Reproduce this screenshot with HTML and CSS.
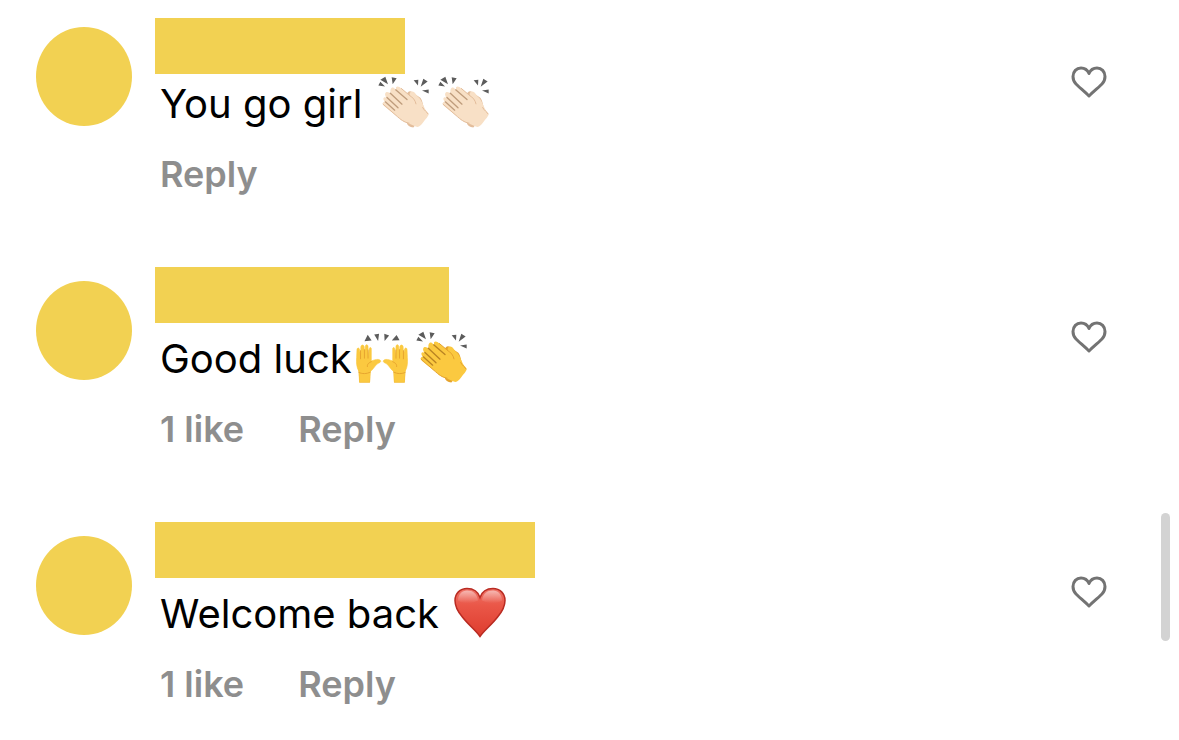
FILE: index.html
```
<!DOCTYPE html>
<html lang="en">
<head>
  <meta charset="utf-8">
  <meta name="viewport" content="width=device-width, initial-scale=1">
  <title>Comments</title>
  <link rel="stylesheet" href="styles.css">
</head>
<body>

  <!-- shared drawings -->
  <svg class="defs" aria-hidden="true">
    <defs>
      <linearGradient id="red" x1="0" y1="0" x2="0" y2="1">
        <stop offset="0" stop-color="#ee7468"/>
        <stop offset="0.35" stop-color="#ea5748"/>
        <stop offset="1" stop-color="#de3c2e"/>
      </linearGradient>
      <linearGradient id="shine" x1="0" y1="0" x2="0" y2="1">
        <stop offset="0" stop-color="#fff" stop-opacity="0.5"/>
        <stop offset="1" stop-color="#fff" stop-opacity="0"/>
      </linearGradient>
    </defs>
    <symbol id="clap" viewBox="54 36 156 158">
      <path class="ray" d="M55 64l6-11 14 14zM61 47l15-9 8 22zM95 39l15 3-12 18zM161 48l14-1-1 17zM190 44l13 8-21 16zM186 79l20-3v12z"/>
      <path class="skin-dark" d="M138 94C144 78 152 78 161 87L181 101C190 112 189 133 198 145L160 190C149 190 142 184 140 176Z"/>
      <path class="skin" d="M108 69C113 65 119 69 124 73L149 94C148 86 151 82 157 82C164 82 167 91 174 98C190 112 188 130 204 146C210 153 199 162 193 170C187 178 179 191 169 188C159 183 151 181 141 176C131 175 120 164 113 158L73 126C66 119 68 113 75 113L72 110C67 101 73 97 79 101L77 97C72 87 79 80 88 86L92 88C89 76 94 68 101 71L108 77Z"/>
      <path class="crease" d="M76 113L104 138M81 100L114 131M91 87L126 120M107 77L141 106"/>
      <path class="edge" d="M69 120L113 158C127 171 139 176 147 177M149 94C158 99 166 108 168 119M188 130C193 140 200 142 204 149M149 94L124 73"/>
    </symbol>
    <symbol id="raised" viewBox="54 38 160 158">
      <path class="ray" d="M80 67l10-20 12 18zM110 46l15-2-3 22zM141 44l15 5-14 17zM164 65l15-17 9 16z"/>
      <g id="palm">
        <path class="skin-dark" d="M62 151L64 194H97L98 158Z"/>
        <path class="skin wide" d="M57 94C57 86 64 86 65 93L68 113L69 84C70 77 78 77 79 84L80 111L83 82C84 76 91 77 91 84L91 113L95 89C97 84 102 86 101 93L101 128C109 125 116 122 123 123C131 124 132 131 126 133C115 136 111 150 98 160L96 193H65L63 160C55 145 55 133 56 117Z"/>
        <path class="edge" d="M68 96L68 121M80 93L80 119M91 94L91 119M63 163C73 168 86 168 98 162M101 130C91 134 88 139 89 145"/>
      </g>
      <use href="#palm" transform="matrix(-1 0 0 1 268 0)"/>
    </symbol>
    <symbol id="heart" viewBox="0 0 52 52">
      <path fill="url(#red)" stroke="#b92b22" stroke-width="1.5" d="M26 50C22 44 14 38 8 30C3 24 1 20 1 14C1 7 6 2 13 2C19 2 24 5 26 11C28 5 33 2 39 2C46 2 51 7 51 14C51 20 49 24 44 30C38 38 30 44 26 50Z"/>
      <path fill="url(#shine)" d="M4 14C4 8 8 4 13 4C19 4 23 7 24 14C18 17 10 18 4 14ZM28 14C29 7 33 4 39 4C44 4 48 8 48 14C42 18 34 17 28 14Z"/>
    </symbol>
    <symbol id="like" viewBox="0 0 36 32">
      <path fill="none" stroke="#737373" stroke-width="3" stroke-linejoin="round" d="M18 30C14 26 8 21 5 18C2 15 2 13 2 10.500C2 5.500 5.500 2 10 2C13.500 2 16.500 4 18 7.500C19.500 4 22.500 2 26 2C30.500 2 34 5.500 34 10.500C34 13 34 15 31 18C28 21 22 26 18 30Z"/>
    </symbol>
  </svg>

  <ul class="comments">
    <li class="comment comment-first">
      <div class="avatar"></div>
      <div class="comment-body">
        <div class="username username-short"></div>
        <p class="comment-text">You go girl <svg class="emoji light" role="img" aria-label="clapping hands"><use href="#clap"/></svg><svg class="emoji light" role="img" aria-label="clapping hands"><use href="#clap"/></svg></p>
        <div class="actions">
          <button type="button">Reply</button>
        </div>
      </div>
      <button type="button" class="like" aria-label="Like"><svg><use href="#like"/></svg></button>
    </li>

    <li class="comment">
      <div class="avatar"></div>
      <div class="comment-body">
        <div class="username username-medium"></div>
        <p class="comment-text">Good luck<svg class="emoji" role="img" aria-label="raised hands"><use href="#raised"/></svg><svg class="emoji" role="img" aria-label="clapping hands"><use href="#clap"/></svg></p>
        <div class="actions">
          <button type="button">1 like</button>
          <button type="button">Reply</button>
        </div>
      </div>
      <button type="button" class="like" aria-label="Like"><svg><use href="#like"/></svg></button>
    </li>

    <li class="comment">
      <div class="avatar"></div>
      <div class="comment-body">
        <div class="username username-long"></div>
        <p class="comment-text">Welcome back <svg class="emoji" role="img" aria-label="red heart"><use href="#heart"/></svg></p>
        <div class="actions">
          <button type="button">1 like</button>
          <button type="button">Reply</button>
        </div>
      </div>
      <button type="button" class="like" aria-label="Like"><svg><use href="#like"/></svg></button>
    </li>
  </ul>

  <div class="scroll-thumb"></div>

</body>
</html>
```
FILE: styles.css
```
body {
    margin: 0;
    background: #fff;
    color: #000;
    font-family: Inter, "Liberation Sans", sans-serif;
}

button {
    padding: 0;
    border: 0;
    background: none;
    font: inherit;
    color: inherit;
    cursor: pointer;
}

.defs {
    position: absolute;
    width: 0;
    height: 0;
}

.comments {
    margin: 0;
    padding: 18px 72px 0 36px;
    list-style: none;
}

.comment {
    display: flex;
    align-items: flex-start;
    padding-bottom: 69px;
}

.comment:last-child {
    padding-bottom: 0;
}

.avatar {
    flex: none;
    width: 96px;
    height: 99px;
    margin: 14px 23px 0 0;
    border-radius: 50%;
    background: #f2d152;
}

.comment-body {
    flex: 1;
    min-width: 0;
}

.username {
    max-width: 100%;
    height: 56px;
    background: #f2d152;
}

.username-short {
    width: 250px;
}

.username-medium {
    width: 294px;
}

.username-long {
    width: 380px;
}

.comment-text {
    margin: 8px 0 0 5px;
    font-size: 40px;
    line-height: 56px;
}

.emoji {
    width: 52px;
    height: 53px;
    margin: 0 4px;
    vertical-align: -11px;
}

.actions {
    display: flex;
    gap: 54px;
    margin: 18px 0 0 5px;
    color: #8e8e8e;
    font-size: 36px;
    font-weight: 600;
    line-height: 48px;
}

.like {
    flex: none;
    margin-top: 54px;
}

.like svg {
    display: block;
    width: 36px;
    height: 32px;
}

/* the first comment sits a little closer to its name */
.comment-first .avatar {
    margin-top: 9px;
}

.comment-first .comment-text {
    margin-top: 2px;
}

.comment-first .like {
    margin-top: 48px;
}

/* emoji colours */
.emoji {
    --skin: #fbc940;
    --skin-dark: #e5a32e;
    --crease: #b98322;
}

.emoji.light {
    --skin: #f8e0c6;
    --skin-dark: #e3bd9b;
    --crease: #bf9c7c;
}

.ray {
    fill: #5c5c5c;
}

.skin {
    fill: var(--skin);
}

.skin.wide {
    stroke: var(--skin);
    stroke-width: 2;
}

.skin-dark {
    fill: var(--skin-dark);
}

.crease,
.edge {
    fill: none;
    stroke: var(--crease);
    stroke-width: 4;
    stroke-linecap: round;
}

.edge {
    stroke: var(--skin-dark);
    stroke-width: 3;
}

.scroll-thumb {
    position: fixed;
    top: 513px;
    right: 9px;
    width: 9px;
    height: 128px;
    border-radius: 5px;
    background: #d3d3d3;
}
```
